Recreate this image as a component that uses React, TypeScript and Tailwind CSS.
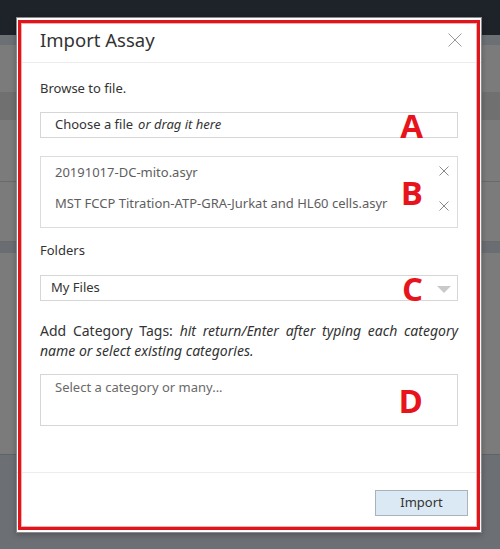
const font = { fontFamily: '"Noto Sans", "Open Sans", sans-serif' };

function Mark({ letter }: { letter: string }) {
  return (
    <span
      className="absolute right-[34px] top-1/2 -translate-y-1/2 text-[33px] font-bold leading-none text-[#e8141c]"
      style={{ fontFamily: '"Open Sans", sans-serif' }}
    >
      {letter}
    </span>
  );
}

function Cross({ size, color, className }: { size: number; color: string; className: string }) {
  return (
    <svg className={className} width={size} height={size} viewBox={`0 0 ${size} ${size}`}>
      <path d={`M0.5 0.5 L${size - 0.5} ${size - 0.5} M${size - 0.5} 0.5 L0.5 ${size - 0.5}`} stroke={color} strokeWidth="1" fill="none" />
    </svg>
  );
}

export default function App() {
  return (
    <div className="relative w-[500px] h-[549px] overflow-hidden bg-[#7b7b7b]" style={font}>
      {/* page behind the overlay */}
      <div className="flex flex-col h-full">
        <div className="h-[35px] bg-[#1e2229]" />
        <div className="h-[10px] bg-[#6b7075]" />
        <div className="h-[47px] bg-[#7b7b7b]" />
        <div className="h-[28px] bg-[#707070]" />
        <div className="h-[62px] bg-[#7b7b7b] border-b border-[#6a6a6a]" />
        <div className="h-[60px] bg-[#7b7b7b] border-b border-[#6a6a6a]" />
        <div className="h-[11px] bg-[#6a6e72]" />
        <div className="h-[202px] bg-[#7b7b7b] border-b border-[#5f6266]" />
        <div className="flex-1 bg-[#6c7075]" />
      </div>

      {/* modal */}
      <div className="absolute left-[16px] top-[17px] w-[466px] h-[516px] bg-white border border-[#8a8a8a] flex flex-col shadow-[0_2px_6px_rgba(0,0,0,0.25)]">
        <div className="relative h-[45px] flex items-center px-[23px] border-b border-[#ececec] shrink-0">
          <h1 className="text-[18.5px] text-[#333] leading-none pt-[1px]">Import Assay</h1>
          <Cross size={14} color="#9a9a9a" className="absolute left-[431px] top-[15px]" />
        </div>

        <div className="flex-1 px-[23px] text-[13px] text-[#333]">
          <p className="mt-[15px] leading-[20px]">Browse to file.</p>

          <div className="relative mt-[14px] h-[26px] border border-[#d6d6d6] flex items-center pl-[14px]">
            <span>Choose a file</span>
            <span className="italic ml-[5px]">or drag it here</span>
            <Mark letter="A" />
          </div>

          <div className="relative mt-[18px] h-[72px] border border-[#dcdcdc] flex flex-col text-[#5e5e5e]">
            <div className="flex items-center h-[30px] pl-[14px] pt-[1px]">
              <span>20191017-DC-mito.asyr</span>
            </div>
            <div className="flex items-center h-[34px] pl-[14px]">
              <span>MST FCCP Titration-ATP-GRA-Jurkat and HL60 cells.asyr</span>
            </div>
            <Cross size={10} color="#8a8a8a" className="absolute right-[8px] top-[9px]" />
            <Cross size={10} color="#8a8a8a" className="absolute right-[8px] top-[44px]" />
            <Mark letter="B" />
          </div>

          <p className="mt-[12px] leading-[20px]">Folders</p>

          <div className="relative mt-[15px] h-[26px] border border-[#d6d6d6] flex items-center pl-[10px] pr-[6px]">
            <span>My Files</span>
            <Mark letter="C" />
            <svg className="absolute right-[6px] top-[10px]" width="14" height="7" viewBox="0 0 14 7">
              <path d="M0 0 L14 0 L7 7 Z" fill="#c9c9c9" />
            </svg>
          </div>

          <p className="mt-[20px] leading-[20px] text-justify text-[14px]">
            Add Category Tags: <em>hit return/Enter after typing each category name or select existing categories.</em>
          </p>

          <div className="relative mt-[13px] h-[52px] border border-[#d6d6d6] pl-[14px] pt-[2px] text-[#6a6a6a]">
            <span className="leading-[20px]">Select a category or many...</span>
            <Mark letter="D" />
          </div>
        </div>

        <div className="h-[60px] border-t border-[#ececec] flex items-start justify-end pr-[13px] pt-[17px] shrink-0">
          <button className="w-[93px] h-[26px] bg-[#dbe9f4] border border-[#aab3bb] text-[13px] text-[#333]">
            Import
          </button>
        </div>

        {/* red annotation frame */}
        <div className="absolute left-[1px] top-[2px] right-[1px] bottom-[2px] border-[3px] border-[#e0151b] pointer-events-none shadow-[inset_0_0_0_1px_#f6b0b0]" />
      </div>
    </div>
  );
}
